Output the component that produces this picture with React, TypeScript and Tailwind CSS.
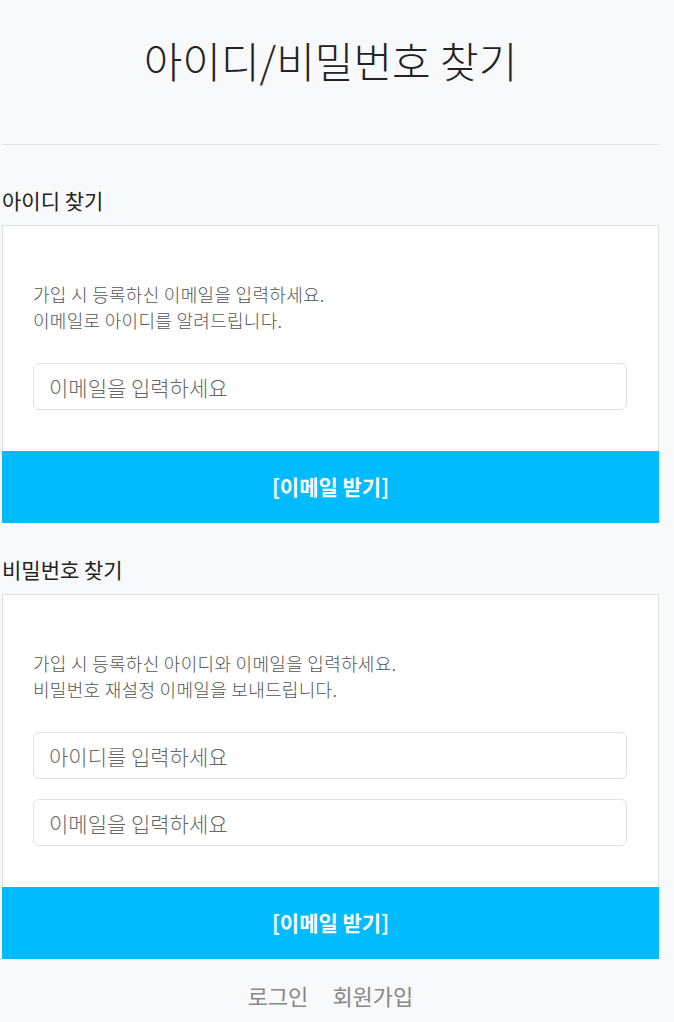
const FONT = "font-['Noto_Sans_CJK_KR','Noto_Sans',sans-serif]";

function Field({ placeholder }: { placeholder: string }) {
  return (
    <input
      type="text"
      placeholder={placeholder}
      className="block w-full h-[47px] rounded-[6px] border border-[#dee2e6] bg-white px-[15px] text-[21px] font-light text-[#333] placeholder:text-[#666] outline-none"
    />
  );
}

function Section({
  title,
  lines,
  fields,
  className = '',
}: {
  title: string;
  lines: string[];
  fields: string[];
  className?: string;
}) {
  return (
    <section className={className}>
      <h2 className="text-[21px] leading-[26px] font-normal text-[#222] mb-[12px]">{title}</h2>
      <div className="bg-white border border-[#dee2e6] border-b-0 pt-[55px] pb-[41px] pl-[30px] pr-[31px]">
        <div className="text-[18px] leading-[26px] tracking-[0.3px] font-light text-[#555]">
          {lines.map((l) => (
            <p key={l}>{l}</p>
          ))}
        </div>
        <div className="mt-[30px] flex flex-col gap-[20px]">
          {fields.map((f) => (
            <Field key={f} placeholder={f} />
          ))}
        </div>
      </div>
      <button className="block w-full h-[72px] bg-[#00bbff] text-white text-[21px] font-bold">
        [이메일 받기]
      </button>
    </section>
  );
}

export default function App() {
  return (
    <div className={`min-h-[1022px] bg-[#f8f9fa] ${FONT}`}>
      <div className="ml-[2px] w-[657px]">
        <h1 className="pt-[36px] text-center text-[42px] leading-[48px] font-light text-[#222]">
          아이디/비밀번호 찾기
        </h1>
        <hr className="mt-[60px] border-0 border-t border-[#dee2e6]" />

        <Section
          className="mt-[42px]"
          title="아이디 찾기"
          lines={['가입 시 등록하신 이메일을 입력하세요.', '이메일로 아이디를 알려드립니다.']}
          fields={['이메일을 입력하세요']}
        />

        <Section
          className="mt-[33px]"
          title="비밀번호 찾기"
          lines={['가입 시 등록하신 아이디와 이메일을 입력하세요.', '비밀번호 재설정 이메일을 보내드립니다.']}
          fields={['아이디를 입력하세요', '이메일을 입력하세요']}
        />

        <div className="mt-[22px] flex justify-center gap-[24px] text-[22px] leading-[28px] text-[#888]">
          <a href="#">로그인</a>
          <a href="#">회원가입</a>
        </div>
      </div>
    </div>
  );
}
